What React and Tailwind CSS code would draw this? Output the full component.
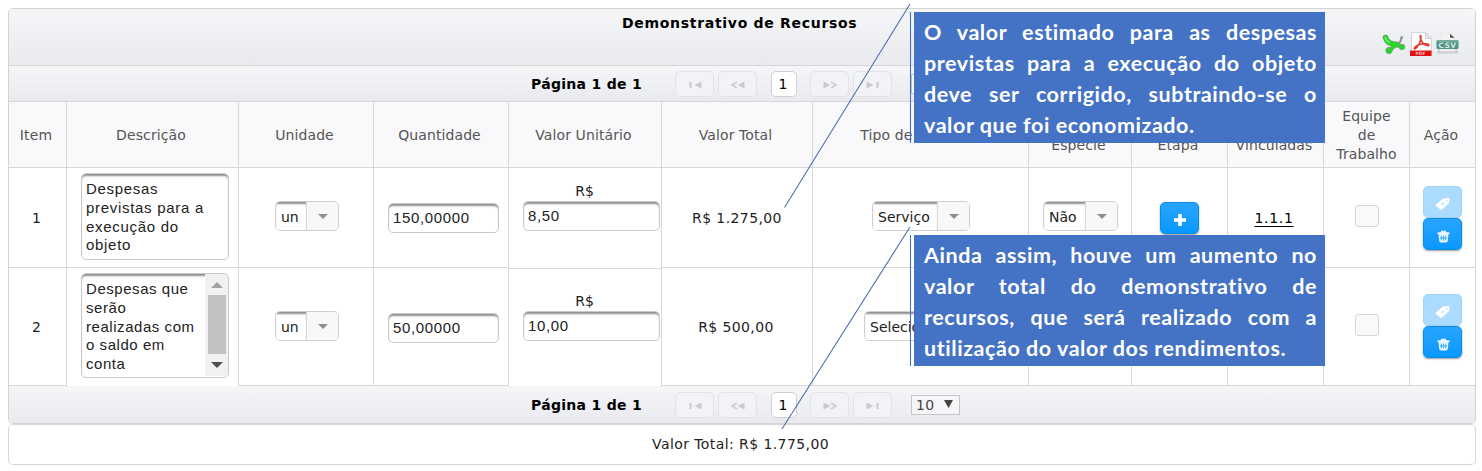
import React from "react";

const cols =
  "grid grid-cols-[58px_172px_135px_135px_153px_151px_216px_103px_96px_96px_86px_65px]";

const PagerIcon = ({ kind }) => {
  const flip = kind === "next" || kind === "last";
  const bar = kind === "first" || kind === "last";
  return (
    <svg width="16" height="10" viewBox="0 0 16 10" className={flip ? "-scale-x-100" : ""}>
      {bar ? (
        <path d="M3.500 2v6" stroke="#c9cacd" strokeWidth="2" />
      ) : (
        <path d="M7 2L2 5l5 3" stroke="#c9cacd" strokeWidth="1.500" fill="none" />
      )}
      <path d="M14.500 1.500v7L7.500 5z" fill="#c9cacd" />
    </svg>
  );
};

const PagerButton = ({ kind, className }) => (
  <div
    className={`flex h-[26px] w-[39px] items-center justify-center rounded-[5px] border border-[#e2e3e6] bg-[#f2f3f6] pt-0.5 ${className}`}
  >
    <PagerIcon kind={kind} />
  </div>
);

const Pager = ({ className }) => (
  <div className={`flex items-center bg-linear-to-b from-[#f5f6f8] to-[#e8eaee] ${className}`}>
    <div className="ml-[522px] w-[144px] whitespace-nowrap text-[14px] leading-[18px] font-bold tracking-[0.3px] text-black">
      Página 1 de 1
    </div>
    <PagerButton kind="first" className="" />
    <PagerButton kind="prev" className="ml-[4px]" />
    <div className="ml-[14px] flex h-[26px] w-[26px] items-center justify-center rounded-[5px] border border-[#cfcfd2] bg-white pt-px pr-[2px] text-[14px] text-black">
      1
    </div>
    <PagerButton kind="next" className="ml-[13px]" />
    <PagerButton kind="last" className="ml-[4px]" />
    <div className="ml-[19px] flex h-5 w-[49px] items-center border border-[#c6c6c8] bg-[#f6f6f8] pt-px pl-[4px] text-[14px] tracking-[0.4px] text-[#444]">
      10
      <svg width="9" height="8" viewBox="0 0 9 8" className="-mt-[3px] ml-[9px]">
        <path d="M0 0h9L4.500 8z" fill="#444" />
      </svg>
    </div>
  </div>
);

const Th = ({ children, className = "" }) => (
  <div
    className={`flex items-center justify-center border-r border-b border-[#d7d7d7] pt-[2px] pr-[3px] text-center text-[14px] leading-[18.7px] tracking-[0.1px] text-[#555] ${className}`}
  >
    {children}
  </div>
);

const Td = ({ children, className = "", last }) => (
  <div
    className={`flex border-b border-[#d7d7d7] ${last ? "" : "border-r"} ${className}`}
  >
    {children}
  </div>
);

const field =
  "border border-[#c9c9c9] bg-white shadow-[inset_0_3px_2px_-1px_#8f8f8f] font-['Liberation_Sans',Arial,sans-serif]";

const Input = ({ value, className }) => (
  <div
    className={`flex h-[30px] shrink-0 items-center rounded-[5px] border-[1.5px] pt-px pl-[4px] text-[15px] tracking-[0.65px] text-[#222] ${field} ${className}`}
  >
    {value}
  </div>
);

const Select = ({ label, className }) => (
  <div className={`flex h-[30px] shrink-0 overflow-hidden rounded-[5px] border border-[#cfcfcf] ${className}`}>
    <div className="flex flex-1 items-center overflow-hidden bg-white pt-[2px] pl-[5px] text-[14px] whitespace-nowrap text-[#222] shadow-[inset_0_3px_2px_-1px_#8f8f8f]">
      {label}
    </div>
    <div className="flex w-[32px] items-center justify-center border-l border-[#d7d7d7] bg-[#f8f8fb]">
      <svg width="10" height="5" viewBox="0 0 10 5">
        <path d="M0 0h10L5 5z" fill="#909090" />
      </svg>
    </div>
  </div>
);

const blueButton =
  "flex h-8 w-[39px] items-center justify-center rounded-[5px] border border-[#0a8ce8] bg-linear-to-b from-[#27a5ff] to-[#0698ff] shadow-[0_1px_2px_#9a9a9a]";

const Actions = () => (
  <div className="flex flex-col">
    <div className="flex h-8 w-[39px] items-center justify-center rounded-[5px] border border-[#a0d3f5] bg-[#abdcff]">
      <svg width="15" height="14" viewBox="0 0 15 14" className="mt-[3px]">
        <path
          fill="#fff"
          d="M8 1.500l5.500-.5q1 0 1 1l-.7 4.300-6.700 6.300q-.9.700-1.700 0L.9 8.900q-.6-.8.200-1.600z"
        />
        <path d="M8.300 5.200L6.200 7.400l1 1 2.200-2.200z" fill="#abdcff" />
        <circle cx="11.800" cy="3.600" r=".8" fill="#abdcff" />
      </svg>
    </div>
    <div className={blueButton}>
      <svg width="13" height="13" viewBox="0 0 13 13" className="mt-[5px] ml-[2px]">
        <path d="M4 2V.8h5V2l3.500.5v1.500H.5V2.500z" fill="#e9f6ff" />
        <path d="M1.500 4h10l-.7 6.700q-.2 1.600-1.700 1.800H3.900q-1.500-.2-1.700-1.800z" fill="#e9f6ff" />
        <path d="M4.300 5.500v5M6.500 5.500v5M8.700 5.500v5M3 8h7" stroke="#1d9fff" strokeWidth=".8" />
      </svg>
    </div>
  </div>
);

const Plus = () => (
  <div className={blueButton}>
    <svg width="12" height="12" viewBox="0 0 12 12" className="mt-[3px]">
      <path d="M4.200 0h3.600v4.200H12v3.600H7.800V12H4.200V7.800H0V4.200h4.200z" fill="#fff" />
    </svg>
  </div>
);

const Check = ({ className = "" }) => (
  <div className={`h-[22px] w-6 rounded-[3px] border-[1.5px] border-[#d6d6d6] bg-[#f9f9fb] ${className}`} />
);

const ExportIcons = () => (
  <div className="flex items-center gap-[4px]">
    <svg width="24" height="22" viewBox="0 0 24 22">
      <g stroke="#849684" strokeLinecap="round" fill="none">
        <path d="M3.500 4.500c1 4 5 7 11 7" strokeWidth="5.800" />
        <path d="M7.500 17.500c2-1 3-3 6-5.500l7 1.500" strokeWidth="4" />
        <path d="M15 12c3-1.500 4-4.500 4.500-7.500" strokeWidth="1.800" />
      </g>
      <g stroke="#1fdc1f" strokeLinecap="round" fill="none">
        <path d="M3.500 4.500c1 4 5 7 11 7" strokeWidth="4.400" />
        <path d="M7.500 17.500c2-1 3-3 6-5.500l7 1.500" strokeWidth="2.600" />
      </g>
      <circle cx="7" cy="17.500" r="3.200" fill="#21d921" stroke="#849684" strokeWidth=".7" />
      <circle cx="20" cy="14" r="2.800" fill="#21d921" stroke="#849684" strokeWidth=".7" />
      <circle cx="19.800" cy="4.500" r="1.500" fill="#8aa88a" />
      <path d="M3 4c.8 3 2.500 4.500 4.500 5.500" stroke="#8df58d" strokeWidth="1.200" fill="none" />
    </svg>
    <svg width="22" height="24" viewBox="0 0 22 24">
      <path d="M1.500.5h14l6 6v17h-20z" fill="#fff" stroke="#d4d4d4" />
      <path d="M15.500.5v6h6z" fill="#e6e6e6" stroke="#c9c9c9" strokeWidth=".8" />
      <path
        d="M10.500 3.500c-1 .5.300 5 2.500 7.500s6 3.500 6 2-6-1.800-9.500-.5-6 3.500-5.200 4.300 3.500-1.800 5-5S11.500 3.500 10.500 3.500z"
        fill="none"
        stroke="#e2382c"
        strokeWidth="1.500"
      />
      <path d="M0 18.500h21.500V24H0z" fill="#e20f13" />
      <text x="10.500" y="23" fontSize="4.500" textAnchor="middle" fill="#f6b3b3" fontWeight="bold">
        PDF
      </text>
    </svg>
    <svg width="23" height="22" viewBox="0 0 23 22">
      <path d="M4 2.500Q4 .5 6 .5h8l4.500 4.500v3H4z" fill="#f3f3f3" stroke="#e0e0e0" strokeWidth=".6" />
      <path d="M14 .8l4.500 4H14z" fill="#555" />
      <path d="M3 15h17l2.500 5.500h-22z" fill="#c9cbcd" />
      <path d="M4 15h15l.5 3.500h-16z" fill="#eceded" />
      <rect x=".5" y="7" width="22" height="9" rx="1.500" fill="#4f9484" />
      <rect x=".5" y="7" width="22" height="2" rx="1" fill="#72ac9f" />
      <text x="11.500" y="14.500" fontSize="7.500" textAnchor="middle" fill="#cfe5df" fontWeight="bold" letterSpacing=".5">
        CSV
      </text>
    </svg>
  </div>
);

const Callout = ({ lines, last, className }) => (
  <div
    className={`absolute left-[914px] h-[131px] w-[411px] bg-[#4472c4] pt-[5px] pr-[8px] pl-[10px] font-['Lato','Open_Sans',sans-serif] text-[21.5px] leading-[31px] font-bold tracking-[0.55px] text-white ${className}`}
  >
    {lines.map((l) => (
      <div key={l} className="whitespace-nowrap [text-align-last:justify]">
        {l}
      </div>
    ))}
    <div className="whitespace-nowrap">{last}</div>
  </div>
);

export default function App() {
  return (
    <div className="relative h-[471px] w-[1482px] overflow-hidden bg-white pt-2 pl-2 font-['DejaVu_Sans',Verdana,sans-serif] text-[14px] text-[#222]">
      <div className="h-[416px] w-[1468px] overflow-hidden rounded-[5px] border border-[#d3d3d3]">
        <div className="relative h-[57px] border-b border-[#d7d7d7] bg-linear-to-b from-[#f5f6f8] to-[#e8eaee] pt-[5px]">
          <div className="pl-[613px] text-[14px] leading-[18px] font-bold tracking-[0.7px] text-black">
            Demonstrativo de Recursos
          </div>
          <div className="absolute top-[23px] right-[16px]">
            <ExportIcons />
          </div>
        </div>
        <Pager className="h-[36px] border-b border-[#d7d7d7]" />
        <div className={`${cols} h-[66px] bg-[#f9f9fc]`}>
          <Th className="pr-0">Item</Th>
          <Th>Descrição</Th>
          <Th>Unidade</Th>
          <Th>Quantidade</Th>
          <Th>Valor Unitário</Th>
          <Th>Valor Total</Th>
          <Th>Tipo de Despesa</Th>
          <Th>
            <br />
            Espécie
          </Th>
          <Th>
            <br />
            Etapa
          </Th>
          <Th>
            <br />
            Vinculadas
          </Th>
          <Th className="pl-[3px]">
            Equipe
            <br />
            de
            <br />
            Trabalho
          </Th>
          <Th className="border-r-0">Ação</Th>
        </div>

        <div className={`${cols} h-[100px]`}>
          <Td className="items-center justify-center pt-[2px] pr-[2px]">1</Td>
          <Td className="pt-[5px] pl-[14px]">
            <div
              className={`h-[87px] w-[148px] rounded-[5px] pt-[6px] pl-[4px] text-[15px] leading-[18.8px] tracking-[0.7px] ${field}`}
            >
              Despesas
              <br />
              previstas para a
              <br />
              execução do
              <br />
              objeto
            </div>
          </Td>
          <Td className="pt-[33px] pl-[36px]">
            <Select label="un" className="w-[64px]" />
          </Td>
          <Td className="pt-[35px] pl-[14px]">
            <Input value="150,00000" className="w-[111px]" />
          </Td>
          <Td className="-mb-px flex-col pt-[14px] pl-[14px]">
            <div className="h-[19px] w-[123px] text-center leading-[19px]">R$</div>
            <Input value="8,50" className="w-[137px]" />
          </Td>
          <Td className="items-center justify-center pt-[2px] tracking-[0.4px]">R$ 1.275,00</Td>
          <Td className="pt-[33px] pl-[59px]">
            <Select label="Serviço" className="w-[98px]" />
          </Td>
          <Td className="pt-[33px] pl-[14px]">
            <Select label="Não" className="w-[75px]" />
          </Td>
          <Td className="pt-[34px] pl-[28px]">
            <Plus />
          </Td>
          <Td className="items-center justify-center pt-[2px] pr-[3px] tracking-[0.7px] text-black underline underline-offset-[3px]">
            1.1.1
          </Td>
          <Td className="pt-[37px] pl-[31px]">
            <Check />
          </Td>
          <Td last className="pt-[18px] pl-[13px]">
            <Actions />
          </Td>
        </div>

        <div className={`${cols} h-[118px]`}>
          <Td className="items-center justify-center pt-[2px] pr-[2px]">2</Td>
          <Td className="border-b-0 pt-[5px] pl-[14px]">
            <div className={`flex h-[105px] w-[148px] overflow-hidden rounded-[5px] ${field}`}>
              <div className="flex-1 pt-[6px] pl-[4px] text-[15px] leading-[18.8px] tracking-[0.55px] whitespace-nowrap">
                Despesas que
                <br />
                serão
                <br />
                realizadas com
                <br />o saldo em
                <br />
                conta
              </div>
              <div className="-mt-px flex h-[103px] w-[23px] flex-col items-center bg-[#f1f1f1] pt-[9px]">
                <svg width="12" height="6" viewBox="0 0 12 6">
                  <path d="M0 6h12L6 0z" fill="#a3a3a3" />
                </svg>
                <div className="mt-[7px] h-[59px] w-[18px] bg-[#c1c1c1]" />
                <svg width="12" height="6" viewBox="0 0 12 6" className="mt-[8px]">
                  <path d="M0 0h12L6 6z" fill="#505050" />
                </svg>
              </div>
            </div>
          </Td>
          <Td className="pt-[43px] pl-[36px]">
            <Select label="un" className="w-[64px]" />
          </Td>
          <Td className="pt-[45px] pl-[14px]">
            <Input value="50,00000" className="w-[111px]" />
          </Td>
          <Td className="flex-col border-b-0 pt-[24px] pl-[14px]">
            <div className="h-[19px] w-[123px] text-center leading-[19px]">R$</div>
            <Input value="10,00" className="w-[137px]" />
          </Td>
          <Td className="items-center justify-center pt-[2px] pr-[2px] tracking-[0.4px]">R$ 500,00</Td>
          <Td className="pt-[43px] pl-[51px]">
            <Select label="Selecione" className="w-[114px]" />
          </Td>
          <Td className="pt-[43px] pl-[14px]">
            <Select label="Não" className="w-[75px]" />
          </Td>
          <Td className="pt-[43px] pl-[28px]">
            <Plus />
          </Td>
          <Td />
          <Td className="pt-[46px] pl-[31px]">
            <Check />
          </Td>
          <Td last className="pt-[26px] pl-[13px]">
            <Actions />
          </Td>
        </div>
        <Pager className="h-[37px]" />
      </div>
      <div className="flex h-[41px] w-[1468px] items-center rounded-[5px] border border-[#d7d7d7] pb-[1px] pl-[643px] tracking-[0.42px]">
        Valor Total: R$ 1.775,00
      </div>

      <Callout
        className="top-[12px]"
        lines={[
          "O valor estimado para as despesas",
          "previstas para a execução do objeto",
          "deve ser corrigido, subtraindo-se o",
        ]}
        last="valor que foi economizado."
      />
      <Callout
        className="top-[235px]"
        lines={[
          "Ainda assim, houve um aumento no",
          "valor total do demonstrativo de",
          "recursos, que será realizado com a",
        ]}
        last="utilização do valor dos rendimentos."
      />
      <svg
        className="pointer-events-none absolute top-0 left-0"
        width="1482"
        height="471"
        viewBox="0 0 1482 471"
        fill="none"
        stroke="#4a6fb0"
        strokeWidth="1.100"
      >
        <path d="M910.500 12v131M910 4L784.500 207.500M910.500 235v131M910 227L782 429" />
      </svg>
    </div>
  );
}
